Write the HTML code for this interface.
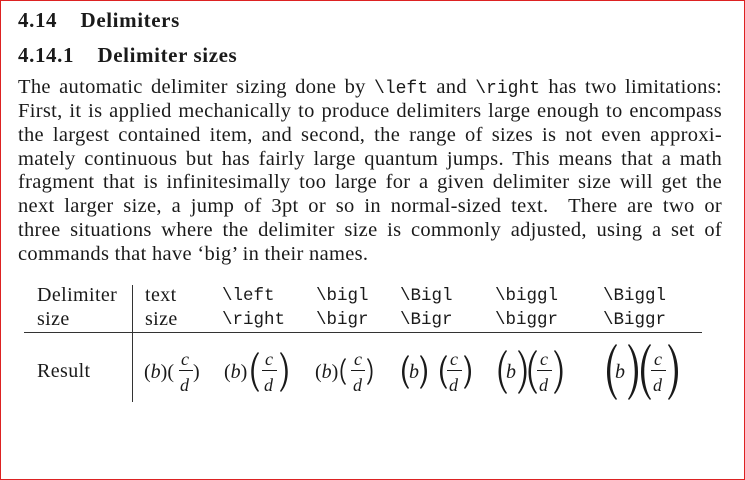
<!DOCTYPE html>
<html><head><meta charset="utf-8"><style>
html,body{margin:0;padding:0;background:#fff;}
body{width:745px;height:480px;position:relative;overflow:hidden;font-family:"Liberation Serif",serif;color:#1a1a1a;}
.frame{position:absolute;left:0;top:0;width:743px;height:478px;border:1px solid #d22;border-right:2px solid #d22;}
.h{position:absolute;font-weight:bold;font-size:21px;letter-spacing:0.6px;left:18px;white-space:pre;}
.ln{position:absolute;left:18px;width:704px;font-size:20.5px;letter-spacing:0.3px;text-align:justify;text-align-last:justify;white-space:nowrap;line-height:22px;}
.ln.last{text-align-last:left;}
.tt{font-family:"Liberation Mono",monospace;font-size:18px;letter-spacing:0;}
.t{position:absolute;font-size:20px;letter-spacing:0.4px;white-space:nowrap;}
.m{position:absolute;font-family:"Liberation Mono",monospace;font-size:17.5px;white-space:nowrap;}
</style></head><body>
<div class="frame"></div>
<div class="h" style="top:8px">4.14    Delimiters</div>
<div class="h" style="top:43px">4.14.1    Delimiter sizes</div>
<div class="ln" style="top:76px">The automatic delimiter sizing done by <span class="tt">\left</span> and <span class="tt">\right</span> has two limitations:</div>
<div class="ln" style="top:100px">First, it is applied mechanically to produce delimiters large enough to encompass</div>
<div class="ln" style="top:124px">the largest contained item, and second, the range of sizes is not even approxi-</div>
<div class="ln" style="top:148px">mately continuous but has fairly large quantum jumps. This means that a math</div>
<div class="ln" style="top:171px">fragment that is infinitesimally too large for a given delimiter size will get the</div>
<div class="ln" style="top:195px">next larger size, a jump of 3pt or so in normal-sized text. &nbsp;There are two or</div>
<div class="ln" style="top:219px">three situations where the delimiter size is commonly adjusted, using a set of</div>
<div class="ln last" style="top:243px">commands that have ‘big’ in their names.</div>

<div class="t" style="left:37px;top:284px">Delimiter</div>
<div class="t" style="left:37px;top:308px">size</div>
<div class="t" style="left:145px;top:284px">text</div>
<div class="t" style="left:145px;top:308px">size</div>
<div class="m" style="left:222px;top:286px">\left</div>
<div class="m" style="left:222px;top:310px">\right</div>
<div class="m" style="left:316px;top:286px">\bigl</div>
<div class="m" style="left:316px;top:310px">\bigr</div>
<div class="m" style="left:400px;top:286px">\Bigl</div>
<div class="m" style="left:400px;top:310px">\Bigr</div>
<div class="m" style="left:495px;top:286px">\biggl</div>
<div class="m" style="left:495px;top:310px">\biggr</div>
<div class="m" style="left:603px;top:286px">\Biggl</div>
<div class="m" style="left:603px;top:310px">\Biggr</div>
<div class="t" style="left:37px;top:360px">Result</div>
<div style="position:absolute;left:24px;top:332px;width:678px;height:1px;background:#333"></div>
<div style="position:absolute;left:132px;top:285px;width:1px;height:117px;background:#333"></div>

<svg style="position:absolute;left:0;top:0" width="745" height="480" font-family="Liberation Serif, serif" fill="#1a1a1a">
<g font-size="20">
<text x="144" y="378">(<tspan font-style="italic">b</tspan>)(</text>
<text x="193" y="378">)</text>
<text x="224" y="378">(<tspan font-style="italic">b</tspan>)</text>
<text x="315" y="378">(<tspan font-style="italic">b</tspan>)</text>
<text x="409" y="378" font-style="italic">b</text>
<text x="506" y="378" font-style="italic">b</text>
<text x="615" y="378" font-style="italic">b</text>
</g>
<g font-size="18" font-style="italic">
<text x="181" y="365">c</text><text x="180" y="391">d</text>
<text x="265" y="365">c</text><text x="264" y="391">d</text>
<text x="354" y="365">c</text><text x="353" y="391">d</text>
<text x="450" y="365">c</text><text x="449" y="391">d</text>
<text x="540" y="365">c</text><text x="539" y="391">d</text>
<text x="654" y="365">c</text><text x="653" y="391">d</text>
</g>
<g stroke="#1a1a1a" stroke-width="1">
<line x1="179" y1="370.5" x2="193" y2="370.5"/>
<line x1="262" y1="370.5" x2="277" y2="370.5"/>
<line x1="351" y1="370.5" x2="365" y2="370.5"/>
<line x1="447" y1="370.5" x2="462" y2="370.5"/>
<line x1="537" y1="370.5" x2="552" y2="370.5"/>
<line x1="651" y1="370.5" x2="666" y2="370.5"/>
</g>
<g>
<path d="M258,352 C249,362 249,382 258,392 L259,391 C252,381 252,363 259,353 Z"/>
<path d="M281,352 C290,362 290,382 281,392 L280,391 C287,381 287,363 280,353 Z"/>
<path d="M345,358 C339,365 339,379 345,385 L346,384 C341,378 341,366 346,359 Z"/>
<path d="M368,358 C374,365 374,379 368,385 L367,384 C372,378 372,366 367,359 Z"/>
<path d="M408,355 C400,364 400,380 408,389 L409,388 C403,379 403,365 409,356 Z"/>
<path d="M421,355 C429,364 429,380 421,389 L420,388 C426,379 426,365 420,356 Z"/>
<path d="M446,355 C438,364 438,380 446,389 L447,388 C441,379 441,365 447,356 Z"/>
<path d="M465,355 C473,364 473,380 465,389 L464,388 C470,379 470,365 464,356 Z"/>
<path d="M506,350 C496,361 496,383 506,394 L507,393 C499,382 499,362 507,351 Z"/>
<path d="M519,350 C529,361 529,383 519,394 L518,393 C526,382 526,362 518,351 Z"/>
<path d="M536,350 C526,361 526,383 536,394 L537,393 C529,382 529,362 537,351 Z"/>
<path d="M555,350 C565,361 565,383 555,394 L554,393 C562,382 562,362 554,351 Z"/>
<path d="M616,344 C604,357 604,387 616,400 L617,399 C608,386 608,358 617,345 Z"/>
<path d="M629,344 C641,357 641,387 629,400 L628,399 C637,386 637,358 628,345 Z"/>
<path d="M650,344 C638,357 638,387 650,400 L651,399 C642,386 642,358 651,345 Z"/>
<path d="M669,344 C681,357 681,387 669,400 L668,399 C677,386 677,358 668,345 Z"/>
</g>
</svg>
</body></html>
